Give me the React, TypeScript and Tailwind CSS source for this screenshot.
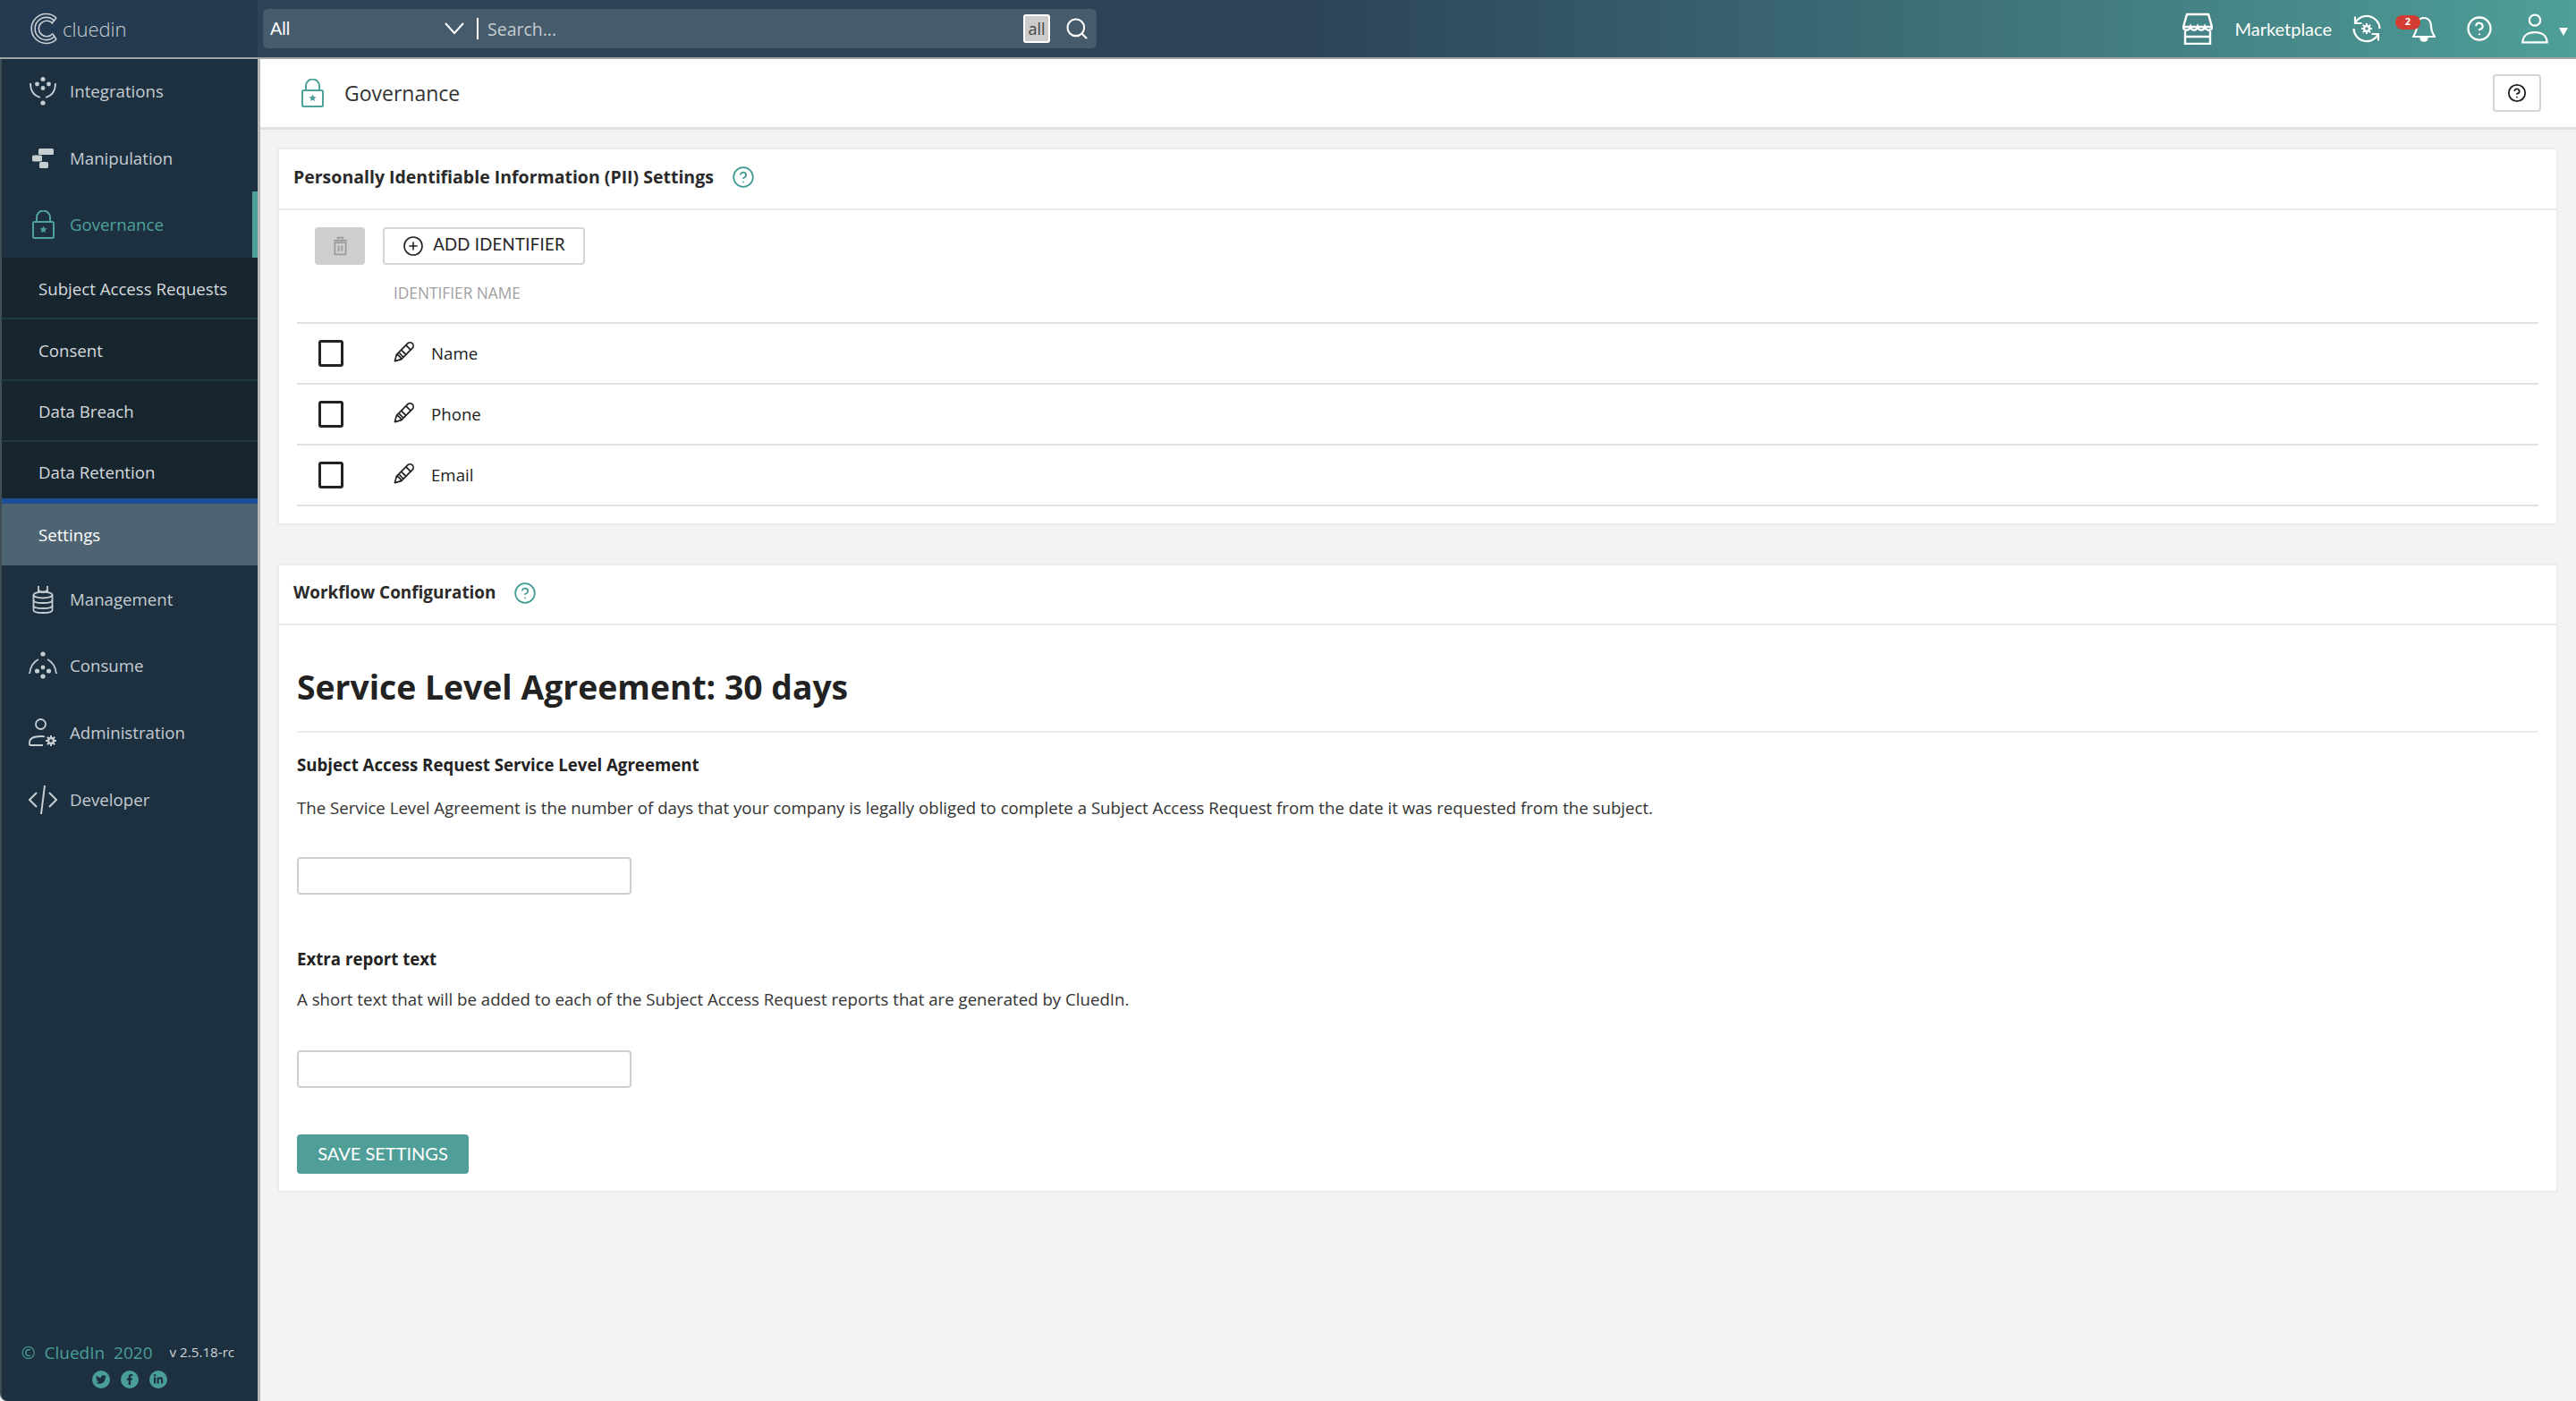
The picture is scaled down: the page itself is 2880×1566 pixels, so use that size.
import React from "react";
import { CirclePlus, CircleHelp, Search } from "lucide-react";
import { FaFacebookF, FaLinkedinIn, FaTwitter } from "react-icons/fa";

const LockIcon = ({ className }: { className: string }) => (
  <svg viewBox="0 0 25 32" className={className} fill="none" stroke="currentColor" strokeWidth="2">
    <path d="M5 13V8a7.5 7.5 0 0 1 15 0v5" />
    <rect x="1" y="13" width="23" height="18" rx="1.5" />
    <path
      d="M12.5 17.5l1.2 2.6 2.8.3-2.1 1.9.6 2.8-2.5-1.4-2.5 1.4.6-2.8-2.1-1.9 2.8-.3z"
      fill="currentColor"
      stroke="none"
    />
  </svg>
);

const Gear = ({ cx, cy, color }: { cx: number; cy: number; color: string }) => (
  <g stroke={color} fill="none">
    <circle cx={cx} cy={cy} r="3" strokeWidth="2.4" />
    <path
      strokeWidth="2"
      d={`M${cx} ${cy - 6}v2.500M${cx} ${cy + 3.5}v2.500M${cx - 6} ${cy}h2.500M${cx + 3.5} ${cy}h2.500M${cx - 4.2} ${cy - 4.2}l1.800 1.800M${cx + 2.4} ${cy + 2.4}l1.800 1.800M${cx + 4.2} ${cy - 4.2}l-1.800 1.800M${cx - 2.4} ${cy + 2.4}l-1.800 1.800`}
    />
  </g>
);

const CluedinLogo = () => (
  <svg viewBox="0 0 34 36" className="w-[34px] h-[36px]" fill="none" stroke="#c9cfd3" strokeWidth="1.6">
    <path d="M29 6A16.5 16.5 0 1 0 29 30" />
    <path d="M27 9.5A12.6 12.6 0 1 0 27 26.5" />
    <path d="M25 12.5A8.8 8.8 0 1 0 25 23.5" />
    <path d="M29 6L24 12M29 30l-4-6" />
  </svg>
);

const IntegrationsIcon = () => (
  <svg viewBox="0 0 32 32" className="w-8 h-8" fill="#c7ced2" stroke="none">
    <circle cx="16" cy="2.5" r="2.5" />
    <circle cx="9.5" cy="8" r="2.4" />
    <circle cx="22.5" cy="8" r="2.4" />
    <circle cx="16" cy="12.5" r="2.4" />
    <circle cx="16" cy="29" r="2.6" />
    <path d="M2 7C2 15 6 21 13 23" fill="none" stroke="#c7ced2" strokeWidth="1.8" />
    <path d="M30 7C30 15 26 21 19 23" fill="none" stroke="#c7ced2" strokeWidth="1.8" />
  </svg>
);

const ManipulationIcon = () => (
  <svg viewBox="0 0 24 24" className="w-[24px] h-[24px]" fill="#c7ced2">
    <rect x="7" y="1" width="17" height="7" rx="1.5" />
    <rect x="0" y="8.5" width="11" height="7" rx="1.5" />
    <rect x="8" y="16" width="10" height="7" rx="1.5" />
  </svg>
);

const ManagementIcon = () => (
  <svg viewBox="0 0 24 32" className="w-6 h-8" fill="none" stroke="#c7ced2" strokeWidth="1.8">
    <path d="M7 1v7M17 1v7M7 5c1 3 3 3 5 3s4 0 5-3" />
    <ellipse cx="12" cy="11" rx="10.5" ry="3.5" />
    <path d="M1.5 11v17c0 2 4.5 3 10.500 3s10.500-1 10.500-3V11" />
    <path d="M1.500 17c0 2 4.500 3 10.500 3s10.500-1 10.500-3M1.500 23c0 2 4.500 3 10.500 3s10.500-1 10.500-3" />
  </svg>
);

const ConsumeIcon = () => (
  <svg viewBox="0 0 32 32" className="w-8 h-8" fill="#c7ced2">
    <circle cx="16" cy="3" r="2.600" />
    <circle cx="9.500" cy="22" r="2.600" />
    <circle cx="22.500" cy="22" r="2.600" />
    <circle cx="16" cy="18" r="2.400" />
    <circle cx="16" cy="28" r="2.600" />
    <path d="M1 25C2 17 5 12 11 9M31 25C30 17 27 12 21 9" fill="none" stroke="#c7ced2" strokeWidth="1.800" />
  </svg>
);

const AdminIcon = () => (
  <svg viewBox="0 0 32 32" className="w-8 h-8" fill="none" stroke="#c7ced2" strokeWidth="1.800">
    <circle cx="13.500" cy="6.500" r="5.500" />
    <path d="M1 30v-3c0-5 5-7 13-7 2 0 3 .2 4 .5M1 30h15" />
    <Gear cx={25} cy={25} color="#c7ced2" />
  </svg>
);

const DeveloperIcon = () => (
  <svg viewBox="0 0 32 32" className="w-8 h-8" fill="none" stroke="#c7ced2" strokeWidth="2">
    <path d="M9 8l-8 8 8 8M23 8l8 8-8 8M18 0l-4 32" />
  </svg>
);

const PencilIcon = () => (
  <svg viewBox="0 0 24 24" className="w-[23px] h-[23px]" fill="none" stroke="#222" strokeWidth="1.800" strokeLinejoin="round">
    <path d="M1.500 22.500l2-7.500L17 1.500c1.500-1 4-.5 5 .5s1.500 3.500.5 5L9 20.500z" />
    <path d="M3.500 15c2 0 5.500 3.500 5.500 5.500M6 12.500l5.500 5.500M9 9.500l5.500 5.500M14.500 4l5.500 5.500" />
  </svg>
);

const TrashIcon = () => (
  <svg viewBox="0 0 16 22" className="w-[15px] h-[22px]" fill="none" stroke="#9a9a9a" strokeWidth="1.800">
    <path d="M0 4.500h16M5 3V1h6v2" />
    <rect x="1.500" y="7" width="13" height="14" />
    <path d="M6 10.500v7M10 10.500v7" />
  </svg>
);

const StoreIcon = () => (
  <svg viewBox="0 0 34 36" className="w-[34px] h-9" fill="none" stroke="#fff" strokeWidth="2.400">
    <path d="M5 2h24l4 14H1z" />
    <path d="M1 16c0 5 6.500 5 8 0 1.500 5 6.500 5 8 0 1.500 5 6.500 5 8 0 1.500 5 8 5 8 0" />
    <path d="M3 21v14h28V21M3 27h28" />
  </svg>
);

const SyncIcon = () => (
  <svg viewBox="0 0 32 32" className="w-8 h-8" fill="none" stroke="#fff" strokeWidth="2.200">
    <path d="M3 10A14.500 14.500 0 0 1 30.500 16" />
    <path d="M29 22A14.500 14.500 0 0 1 1.500 16" />
    <path d="M3 2.500V10h7.500M29 29.500V22h-7.500" />
    <Gear cx={16} cy={16} color="#fff" />
  </svg>
);

const BellIcon = () => (
  <svg viewBox="0 0 26 29" className="w-[26px] h-[29px]" fill="none" stroke="#fff" strokeWidth="2.200">
    <path d="M13 2c-5 0-8 4-8 9 0 6-2 9-4 12h24c-2-3-4-6-4-12 0-5-3-9-8-9z" />
    <path d="M9.500 24c0 5 7 5 7 0" fill="#fff" />
  </svg>
);

const UserIcon = () => (
  <svg viewBox="0 0 32 36" className="w-[30px] h-9" fill="none" stroke="#fff" strokeWidth="2.400">
    <circle cx="16" cy="8" r="6.500" />
    <path d="M1.500 34.500c0-8 6-12 14.500-12s14.500 4 14.500 12z" />
  </svg>
);

const mainItems = [
  { label: "Integrations", icon: <IntegrationsIcon />, h: "h-[73px] pb-[2px]" },
  { label: "Manipulation", icon: <ManipulationIcon />, h: "h-[75px]" },
];

const lowerItems = [
  { label: "Management", icon: <ManagementIcon />, h: "h-[75px]" },
  { label: "Consume", icon: <ConsumeIcon />, h: "h-[74px]" },
  { label: "Administration", icon: <AdminIcon />, h: "h-[75px]" },
  { label: "Developer", icon: <DeveloperIcon />, h: "h-[75px]" },
];

const subItems = [
  { label: "Subject Access Requests", h: "h-[69px]" },
  { label: "Consent", h: "h-[69px]" },
  { label: "Data Breach", h: "h-[68px]" },
];
const identifiers = ["Name", "Phone", "Email"];

const NavItem = ({ label, icon, h }: { label: string; icon: React.ReactNode; h: string }) => (
  <div className={`flex items-center ${h}`}>
    <div className="w-[76px] flex justify-center pl-[22px] pr-[6px] shrink-0">{icon}</div>
    <span className="text-[18.67px] text-[#c5ccd1]">{label}</span>
  </div>
);

const Sidebar = () => (
  <aside className="w-[291px] shrink-0 flex flex-col bg-[#1c3040] border-l-2 border-l-[#3f4d57] border-r-[3px] border-r-[#b4b7b8] rounded-bl-lg">
    {mainItems.map((item) => (
      <NavItem key={item.label} {...item} />
    ))}
    <div className="h-[74px] flex items-center border-r-[6px] border-[#4f9f98] text-[#4fa29b]">
      <div className="w-[76px] flex justify-center pl-[22px] pr-[6px] shrink-0">
        <LockIcon className="w-[25px] h-8" />
      </div>
      <span className="text-[18.67px]">Governance</span>
    </div>
    <div className="bg-[#17252f] text-[#d5dadd] text-[18.67px]">
      {subItems.map((item) => (
        <div key={item.label} className={`${item.h} flex items-center pl-[41px] pt-[2px] border-b-2 border-[#1d3a3d]`}>
          {item.label}
        </div>
      ))}
      <div className="h-[69px] flex items-center pl-[41px] pt-[4px] border-b-[6px] border-[#1d4e96]">Data Retention</div>
    </div>
    <div className="h-[69px] flex items-center pl-[41px] bg-[#4f6472] text-white text-[18.67px]">Settings</div>
    {lowerItems.map((item) => (
      <NavItem key={item.label} {...item} />
    ))}
    <div className="mt-auto pb-[14px] flex flex-col items-center">
      <div className="flex items-center gap-[19px] pr-[4px]">
        <span className="text-[19px] text-[#4a9e98] whitespace-pre">©  CluedIn  2020</span>
        <span className="text-[15.2px] text-[#d0d5d8]">v 2.5.18-rc</span>
      </div>
      <div className="flex gap-3 mt-[6px]">
        {[FaTwitter, FaFacebookF, FaLinkedinIn].map((Icon, i) => (
          <div key={i} className="w-5 h-5 rounded-full bg-[#4a9e98] flex items-center justify-center">
            <Icon className="w-3 h-3 text-[#1c3040]" />
          </div>
        ))}
      </div>
    </div>
  </aside>
);

const TopBar = () => (
  <header className="h-[66px] shrink-0 flex border-b-2 border-[#9ea3a6] bg-linear-to-r from-[#2c4259] from-50% to-[#4e9f98]">
    <div className="w-[288px] shrink-0 flex items-center gap-[2px] pl-[34px] bg-[#243a50]">
      <CluedinLogo />
      <span className="text-[22px] text-[#c9cfd3] font-light">cluedin</span>
    </div>
    <div className="ml-[6px] mt-[10px] w-[932px] h-[44px] rounded-md bg-[#465b6c] flex items-center pl-2 pr-[8px]">
      <span className="text-[20px] text-white font-['Liberation_Sans',sans-serif] w-[195px]">All</span>
      <svg viewBox="0 0 22 14" className="w-[22px] h-[14px]" fill="none" stroke="#fff" strokeWidth="2">
        <path d="M1 1l10 11L21 1" />
      </svg>
      <div className="w-[2px] h-6 bg-white ml-[14px] mr-[10px]" />
      <span className="text-[19.5px] text-[#c5ccd1] flex-1 pt-[1px]">Search...</span>
      <div className="w-[30px] h-[32px] rounded-[3px] border-2 border-white bg-[#ccc] text-[#444] text-[18px] flex items-center justify-center">
        all
      </div>
      <Search className="w-[28px] h-[28px] ml-4 text-white" strokeWidth={1.8} />
    </div>
    <div className="ml-auto flex items-center text-white pr-[9px]">
      <StoreIcon />
      <span className="text-[20px] ml-[24px] mr-[23px] font-['Lato',sans-serif]">Marketplace</span>
      <SyncIcon />
      <div className="relative ml-[35px] mr-[34px]">
        <BellIcon />
        <span className="absolute -top-[1px] -left-[19px] w-7 h-4 rounded-full bg-[#d33c34] text-white text-[11px] font-bold flex items-center justify-center">
          2
        </span>
      </div>
      <CircleHelp className="w-[30px] h-[30px]" strokeWidth={1.8} />
      <div className="ml-[32px]">
        <UserIcon />
      </div>
      <span className="ml-[12px] mt-[6px] border-x-[5px] border-x-transparent border-t-[9px] border-t-white" />
    </div>
  </header>
);

const Card = ({ title, titleClass, helpClass, headerClass, children, className }: { title: string; titleClass: string; helpClass: string; headerClass: string; children: React.ReactNode; className: string }) => (
  <section className={`bg-white border-2 border-[#ececec] ${className}`}>
    <div className={`flex items-center pl-[16px] pb-[4px] border-b-2 border-[#ececec] ${headerClass}`}>
      <h2 className={`font-bold text-[#2a2a2a] ${titleClass}`}>{title}</h2>
      <CircleHelp className={`w-[26px] h-[26px] text-[#3f9a94] ${helpClass}`} strokeWidth={1.6} />
    </div>
    {children}
  </section>
);

const App = () => (
  <div className="w-[2880px] h-[1566px] flex flex-col overflow-hidden font-['Open_Sans',sans-serif] bg-[#f3f3f2]">
    <TopBar />
    <div className="flex flex-1 min-h-0">
      <Sidebar />
      <main className="flex-1 flex flex-col min-w-0">
        <div className="h-[79px] shrink-0 bg-white border-b-[3px] border-[#dfe2de] flex items-center justify-between pl-[46px] pr-[39px]">
          <div className="flex items-center gap-[23px]">
            <LockIcon className="w-[25px] h-8 text-[#4fa29b]" />
            <h1 className="text-[23px] text-[#333]">Governance</h1>
          </div>
          <button className="w-[54px] h-[42px] rounded-[4px] border-2 border-[#d4d4d4] flex items-center justify-center">
            <CircleHelp className="w-[22px] h-[22px] text-[#222]" strokeWidth={2} />
          </button>
        </div>
        <div className="pt-[20px] pl-[19px] pr-[20px]">
          <Card title="Personally Identifiable Information (PII) Settings" titleClass="text-[19.5px]" helpClass="ml-[20px]" headerClass="h-[68px]" className="">
            <div className="pl-[20px] pr-[20px] pb-[19px]">
              <div className="flex gap-5 pl-[20px] pt-[19px]">
                <button className="w-[56px] h-[42px] rounded-[4px] bg-[#cfcfcf] flex items-center justify-center">
                  <TrashIcon />
                </button>
                <button className="w-[226px] h-[42px] pb-[2px] rounded-[4px] border-2 border-[#d4d4d4] flex items-center justify-center gap-[10px] text-[18.5px] tracking-[0.3px] text-[#222] font-['Lato',sans-serif]">
                  <CirclePlus className="w-[24px] h-[24px] mt-[2px]" strokeWidth={1.6} />
                  ADD IDENTIFIER
                </button>
              </div>
              <div className="h-[64px] flex items-center pl-[108px] text-[17.3px] text-[#a0a0a0]">IDENTIFIER NAME</div>
              <div className="border-b-2 border-[#e2e2e2]">
                {identifiers.map((name) => (
                  <div key={name} className="h-[68px] flex items-center border-t-2 border-[#e2e2e2]">
                    <div className="w-7 h-[30px] ml-6 rounded-[3px] border-[3px] border-[#222]" />
                    <div className="ml-[56px] -mt-[4px]">
                      <PencilIcon />
                    </div>
                    <span className="ml-[19px] text-[18.67px] text-[#222]">{name}</span>
                  </div>
                ))}
              </div>
            </div>
          </Card>
          <Card title="Workflow Configuration" titleClass="text-[18.9px]" helpClass="ml-[20px]" headerClass="h-[67px]" className="mt-[43px]">
            <div className="pl-[20px] pr-[20px] pb-[19px]">
              <h3 className="mt-[38px] h-[62px] text-[37.3px] leading-[62px] font-bold text-[#222]">Service Level Agreement: 30 days</h3>
              <div className="mt-[18px] border-t-2 border-[#ececec]" />
              <h4 className="mt-[22px] text-[18.67px] leading-[28px] font-bold text-[#222]">Subject Access Request Service Level Agreement</h4>
              <p className="mt-[20px] text-[18.67px] leading-[28px] text-[#333]">
                The Service Level Agreement is the number of days that your company is legally obliged to complete a Subject Access Request from the date it was requested from the subject.
              </p>
              <input className="block mt-[41px] w-[374px] h-[42px] rounded-[4px] border-2 border-[#cfcfcf] bg-white" />
              <h4 className="mt-[58px] text-[18.67px] leading-[28px] font-bold text-[#222]">Extra report text</h4>
              <p className="mt-[17px] text-[18.67px] leading-[28px] text-[#333]">
                A short text that will be added to each of the Subject Access Request reports that are generated by CluedIn.
              </p>
              <input className="block mt-[43px] w-[374px] h-[42px] rounded-[4px] border-2 border-[#cfcfcf] bg-white" />
              <button className="block mt-[52px] w-[192px] h-[44px] pb-[2px] rounded-[4px] bg-[#4f9f98] text-white text-[20px] font-['Lato',sans-serif]">
                SAVE SETTINGS
              </button>
            </div>
          </Card>
        </div>
      </main>
    </div>
  </div>
);

export default App;
